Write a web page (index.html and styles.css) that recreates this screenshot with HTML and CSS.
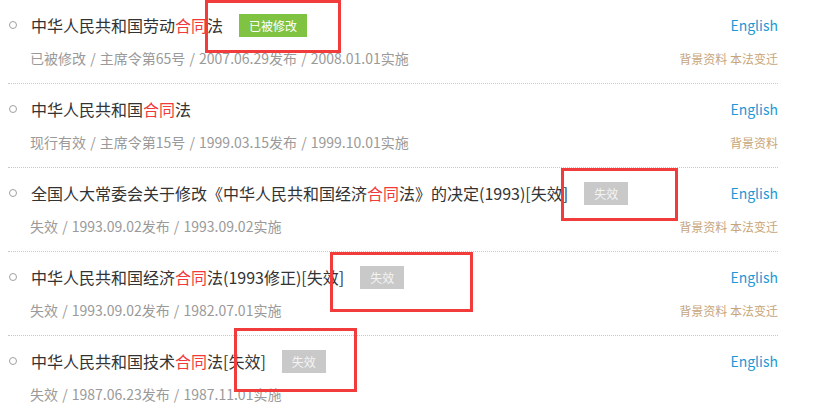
FILE: index.html
```html
<!DOCTYPE html>
<html lang="zh-CN">
<head>
  <meta charset="UTF-8">
  <title>法律列表</title>
  <link rel="stylesheet" href="styles.css">
</head>
<body>
  <div class="page">
    <ul class="law-list">
      <li class="law-item">
        <div class="law-title-row">
          <span class="dot"></span>
          <a class="law-title">中华人民共和国劳动<em>合同</em>法</a>
          <span class="tag tag-green">已被修改</span>
          <a class="eng">English</a>
        </div>
        <div class="law-meta-row">
          <span class="meta">已被修改 / 主席令第65号 / 2007.06.29发布 / 2008.01.01实施</span>
          <span class="links"><a>背景资料</a> <a>本法变迁</a></span>
        </div>
      </li>
      <li class="law-item">
        <div class="law-title-row">
          <span class="dot"></span>
          <a class="law-title">中华人民共和国<em>合同</em>法</a>
          <a class="eng">English</a>
        </div>
        <div class="law-meta-row">
          <span class="meta">现行有效 / 主席令第15号 / 1999.03.15发布 / 1999.10.01实施</span>
          <span class="links"><a>背景资料</a></span>
        </div>
      </li>
      <li class="law-item">
        <div class="law-title-row">
          <span class="dot"></span>
          <a class="law-title">全国人大常委会关于修改《中华人民共和国经济<em>合同</em>法》的决定(1993)[失效]</a>
          <span class="tag tag-gray">失效</span>
          <a class="eng">English</a>
        </div>
        <div class="law-meta-row">
          <span class="meta">失效 / 1993.09.02发布 / 1993.09.02实施</span>
          <span class="links"><a>背景资料</a> <a>本法变迁</a></span>
        </div>
      </li>
      <li class="law-item">
        <div class="law-title-row">
          <span class="dot"></span>
          <a class="law-title">中华人民共和国经济<em>合同</em>法(1993修正)[失效]</a>
          <span class="tag tag-gray">失效</span>
          <a class="eng">English</a>
        </div>
        <div class="law-meta-row">
          <span class="meta">失效 / 1993.09.02发布 / 1982.07.01实施</span>
          <span class="links"><a>背景资料</a> <a>本法变迁</a></span>
        </div>
      </li>
      <li class="law-item">
        <div class="law-title-row">
          <span class="dot"></span>
          <a class="law-title">中华人民共和国技术<em>合同</em>法[失效]</a>
          <span class="tag tag-gray">失效</span>
          <a class="eng">English</a>
        </div>
        <div class="law-meta-row">
          <span class="meta">失效 / 1987.06.23发布 / 1987.11.01实施</span>
          <span class="links"></span>
        </div>
      </li>
    </ul>

    <!-- annotation boxes -->
    <div class="mark mark-1"></div>
    <div class="mark mark-2"></div>
    <div class="mark mark-3"></div>
    <div class="mark mark-4"></div>
  </div>
</body>
</html>
```

FILE: styles.css
```css
body {
  margin: 0;
  padding: 0;
  background: #fff;
  font-family: "Noto Sans CJK SC", "Noto Sans", sans-serif;
  color: #333;
}
.page {
  position: relative;
  width: 816px;
  height: 419px;
  overflow: hidden;
}
.law-list {
  list-style: none;
  margin: 0 0 0 8px;
  padding: 0;
  width: 770px;
}
.law-item {
  padding: 12px 0 15px;
  border-bottom: 1px dotted #c8c8c8;
}
.law-title-row {
  display: flex;
  align-items: center;
  height: 26px;
}
.dot {
  width: 6px;
  height: 6px;
  border: 1px solid #a0a0a0;
  border-radius: 50%;
  margin: 0 14px 0 1px;
  flex-shrink: 0;
}
.law-title {
  font-size: 16px;
  line-height: 26px;
  color: #333;
  white-space: nowrap;
}
.law-title em {
  font-style: normal;
  color: #f23a3a;
}
.tag {
  margin-left: 16px;
  height: 23px;
  line-height: 23px;
  padding: 0 10px;
  font-size: 12px;
  color: #fff;
}
.tag-green {
  background: #80c342;
}
.tag-gray {
  background: #c9c9c9;
  color: #f4f4f4;
}
.eng {
  margin-left: auto;
  font-size: 14px;
  color: #1e98d4;
}
.law-meta-row {
  display: flex;
  align-items: center;
  justify-content: space-between;
  height: 20px;
  margin-top: 10px;
  padding-left: 22px;
}
.meta {
  font-size: 14px;
  word-spacing: 1px;
  color: #9a9a9a;
}
.links {
  font-size: 12px;
  color: #c6a57a;
}
.mark {
  position: absolute;
  border: 3px solid #f23b3b;
  box-sizing: border-box;
}
.mark-1 {
  left: 205px;
  top: 0;
  width: 136px;
  height: 53px;
}
.mark-2 {
  left: 561px;
  top: 168px;
  width: 117px;
  height: 53px;
}
.mark-3 {
  left: 330px;
  top: 252px;
  width: 143px;
  height: 60px;
}
.mark-4 {
  left: 234px;
  top: 328px;
  width: 123px;
  height: 64px;
}
```
